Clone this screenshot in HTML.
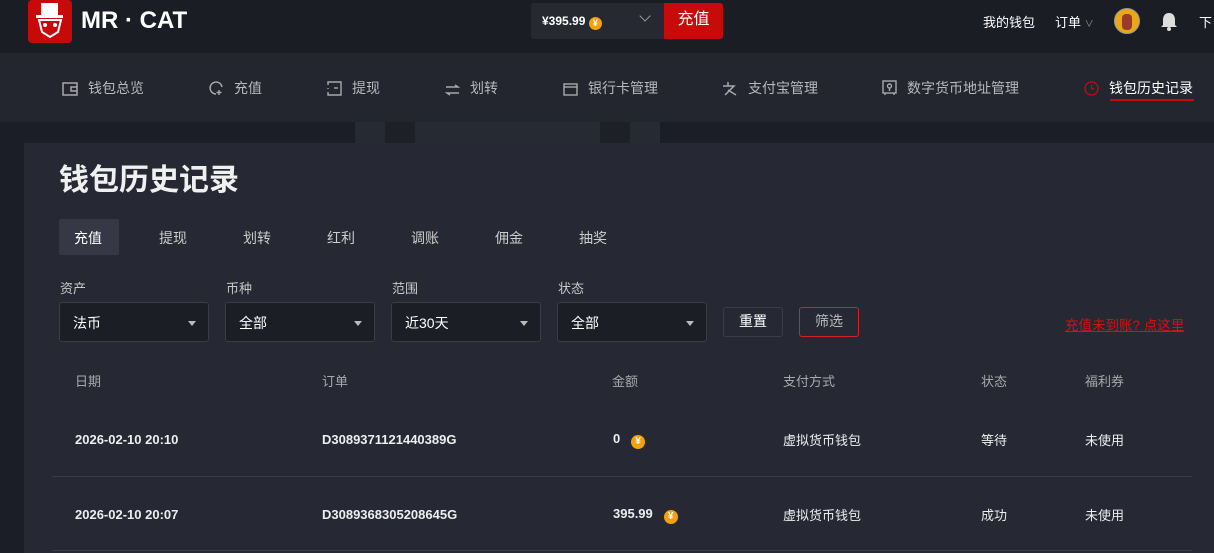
<!DOCTYPE html>
<html><head><meta charset="utf-8"><style>
*{margin:0;padding:0;box-sizing:border-box}
body{width:1214px;height:553px;overflow:hidden;background:#1b1e26;font-family:"Liberation Sans","Noto Sans CJK SC",sans-serif;color:#e6e6e6;position:relative}
.abs{position:absolute}
.hdr{left:0;top:0;width:1214px;height:53px;background:#1b1d25}
.nav{left:0;top:53px;width:1214px;height:69px;background:#23252f}
.nav .it{position:absolute;top:25px;font-size:14px;color:#b8b8bd;white-space:nowrap}
.nav svg{vertical-align:-3px;margin-right:10px}
.card{left:24px;top:143px;width:1190px;height:410px;background:#262833}
.sel{position:absolute;top:302px;width:150px;height:40px;background:#1c1e25;border:1px solid #3a3c46;border-radius:3px;font-size:14px;color:#fff;padding:10px 0 0 13px}
.sel:after{content:"";position:absolute;right:12px;top:18px;border:4px solid transparent;border-top:5px solid #bbb}
.lbl{position:absolute;top:278px;font-size:13px;color:#c8c8c8}
.th{position:absolute;top:371px;font-size:13px;color:#a8a8ad}
.td{position:absolute;font-size:13px;font-weight:bold;color:#eee}
.cn{font-weight:normal}
.coin{display:inline-block;width:14px;height:14px;border-radius:50%;background:#f5a10a;color:#fff;font-size:10px;text-align:center;line-height:14px;vertical-align:-1px}
.line{position:absolute;left:52px;width:1140px;height:1px;background:#3a3c47}
</style></head><body>
<div class="abs hdr"></div>
<div class="abs" style="left:28px;top:0;width:44px;height:43px;background:#c8090a;border-radius:4px">
<svg width="44" height="43" viewBox="0 0 44 43"><rect x="13" y="3" width="17" height="13" fill="#fff"/><rect x="8" y="15" width="27" height="3" fill="#fff"/><path d="M11 20h22l-3 12-8 5-8-5z" fill="none" stroke="#fff" stroke-width="2"/><circle cx="17" cy="25" r="2" fill="#fff"/><circle cx="27" cy="25" r="2" fill="#fff"/></svg></div>
<div class="abs" style="left:81px;top:7px;font-size:24px;font-weight:bold;color:#fff">MR · CAT</div>
<div class="abs" style="left:531px;top:3px;width:133px;height:36px;background:#262832;border-radius:3px 0 0 3px"></div>
<div class="abs" style="left:542px;top:14px;font-size:12px;font-weight:bold;color:#fff">¥395.99 <span class="coin" style="width:13px;height:13px;line-height:13px;font-size:9px">¥</span></div>
<div class="abs" style="left:641px;top:12px;width:8px;height:8px;border-right:1px solid #999;border-bottom:1px solid #999;transform:rotate(45deg)"></div>
<div class="abs" style="left:664px;top:3px;width:59px;height:36px;background:#c70b0b;border-radius:0 3px 3px 0;color:#fff;font-size:16px;text-align:center;line-height:34px">充值</div>
<div class="abs" style="left:983px;top:12px;font-size:13px;color:#fff">我的钱包</div>
<div class="abs" style="left:1055px;top:12px;font-size:13px;color:#fff">订单 <span style="font-size:9px;color:#999">∨</span></div>
<div class="abs" style="left:1114px;top:8px;width:26px;height:26px;border-radius:50%;background:#e8a81a;border:1px solid #999"><div style="margin:5px auto;width:10px;height:16px;background:#9a3a2a;border-radius:4px"></div></div>
<svg class="abs" style="left:1160px;top:12px" width="18" height="20" viewBox="0 0 18 20"><path d="M9 1c-4 0-6 3-6 7v5l-2 2h16l-2-2V8c0-4-2-7-6-7z" fill="#ddd"/><circle cx="9" cy="17" r="2" fill="#ddd"/></svg>
<div class="abs" style="left:1199px;top:12px;font-size:13px;color:#fff">下</div>
<div class="abs nav">
<div class="it" style="left:62px"><svg width="16" height="14" viewBox="0 0 16 14" fill="none" stroke="#aaa" stroke-width="1.5"><rect x="1" y="1" width="14" height="12"/><path d="M15 5H9v4h6"/></svg>钱包总览</div>
<div class="it" style="left:209px"><svg width="15" height="15" viewBox="0 0 15 15" fill="none" stroke="#aaa" stroke-width="1.4"><path d="M13 6A6 6 0 1 0 7 13"/><path d="M10 9v5M7.5 11.5h5"/></svg>充值</div>
<div class="it" style="left:327px"><svg width="15" height="15" viewBox="0 0 15 15" fill="none" stroke="#aaa" stroke-width="1.4"><path d="M1 4V1h13v13H1v-3M1 7v1"/><path d="M7 7h4"/></svg>提现</div>
<div class="it" style="left:445px"><svg width="15" height="12" viewBox="0 0 15 12" fill="none" stroke="#aaa" stroke-width="1.4"><path d="M1 3h12l-3-2M14 9H2l3 2"/></svg>划转</div>
<div class="it" style="left:563px"><svg width="15" height="13" viewBox="0 0 15 13" fill="none" stroke="#aaa" stroke-width="1.4"><rect x="1" y="1" width="13" height="11"/><path d="M1 4h13"/></svg>银行卡管理</div>
<div class="it" style="left:722px"><svg width="16" height="15" viewBox="0 0 16 15" fill="none" stroke="#aaa" stroke-width="1.5"><path d="M6 1v4M1 5h11L3 14M6 9l8 5"/></svg>支付宝管理</div>
<div class="it" style="left:882px"><svg width="15" height="16" viewBox="0 0 15 16" fill="none" stroke="#aaa" stroke-width="1.4"><rect x="1" y="1" width="13" height="12"/><circle cx="7.5" cy="6" r="2"/><path d="M7.5 8v3M3 13v2M12 13v2"/></svg>数字货币地址管理</div>
<div class="it" style="left:1084px;color:#fff"><svg width="15" height="15" viewBox="0 0 15 15" fill="none" stroke="#c70b0b" stroke-width="1.3"><circle cx="7.5" cy="7.5" r="6.5"/><path d="M7.5 4v4h3"/></svg>钱包历史记录<div style="position:absolute;left:26px;top:21px;width:84px;height:2px;background:#c70b0b"></div></div>
</div>
<div class="abs" style="left:355px;top:122px;width:305px;height:21px;background:#252a33"></div>
<div class="abs" style="left:385px;top:122px;width:30px;height:21px;background:#1d2027"></div>
<div class="abs" style="left:600px;top:122px;width:30px;height:21px;background:#1d2027"></div>
<div class="abs card"></div>
<div class="abs" style="left:59px;top:161px;font-size:30px;font-weight:bold;color:#f0f0f0;line-height:40px">钱包历史记录</div>
<div class="abs" style="left:59px;top:219px;width:60px;height:36px;background:#363845;border-radius:2px"></div>
<div class="abs" style="top:228px;left:0;font-size:14px;color:#ccc;width:700px">
<span class="abs" style="left:74px;color:#fff">充值</span><span class="abs" style="left:159px">提现</span><span class="abs" style="left:243px">划转</span><span class="abs" style="left:327px">红利</span><span class="abs" style="left:411px">调账</span><span class="abs" style="left:495px">佣金</span><span class="abs" style="left:579px">抽奖</span></div>
<div class="lbl" style="left:60px">资产</div><div class="lbl" style="left:226px">币种</div><div class="lbl" style="left:392px">范围</div><div class="lbl" style="left:558px">状态</div>
<div class="sel" style="left:59px">法币</div><div class="sel" style="left:225px">全部</div><div class="sel" style="left:391px">近30天</div><div class="sel" style="left:557px">全部</div>
<div class="abs" style="left:723px;top:307px;width:60px;height:30px;border:1px solid #3a3c46;border-radius:3px;font-size:14px;color:#fff;text-align:center;line-height:27px">重置</div>
<div class="abs" style="left:799px;top:307px;width:60px;height:30px;border:1px solid #d02525;border-radius:3px;font-size:14px;color:#bbb;text-align:center;line-height:27px">筛选</div>
<div class="abs" style="left:1065px;top:314px;font-size:13.5px;color:#d01414;text-decoration:underline">充值未到账? 点这里</div>
<div class="th" style="left:75px">日期</div><div class="th" style="left:322px">订单</div><div class="th" style="left:612px">金额</div><div class="th" style="left:783px">支付方式</div><div class="th" style="left:981px">状态</div><div class="th" style="left:1085px">福利券</div>
<div class="td" style="left:75px;top:432px">2026-02-10 20:10</div><div class="td" style="left:322px;top:432px">D3089371121440389G</div><div class="td" style="left:613px;top:431px">0 &nbsp;&nbsp;<span class="coin">¥</span></div><div class="td cn" style="left:783px;top:430px">虚拟货币钱包</div><div class="td cn" style="left:981px;top:430px">等待</div><div class="td cn" style="left:1085px;top:430px">未使用</div>
<div class="line" style="top:476px"></div>
<div class="td" style="left:75px;top:507px">2026-02-10 20:07</div><div class="td" style="left:322px;top:507px">D3089368305208645G</div><div class="td" style="left:613px;top:506px">395.99 &nbsp;&nbsp;<span class="coin">¥</span></div><div class="td cn" style="left:783px;top:505px">虚拟货币钱包</div><div class="td cn" style="left:981px;top:505px">成功</div><div class="td cn" style="left:1085px;top:505px">未使用</div>
<div class="line" style="top:550px"></div>
</body></html>
